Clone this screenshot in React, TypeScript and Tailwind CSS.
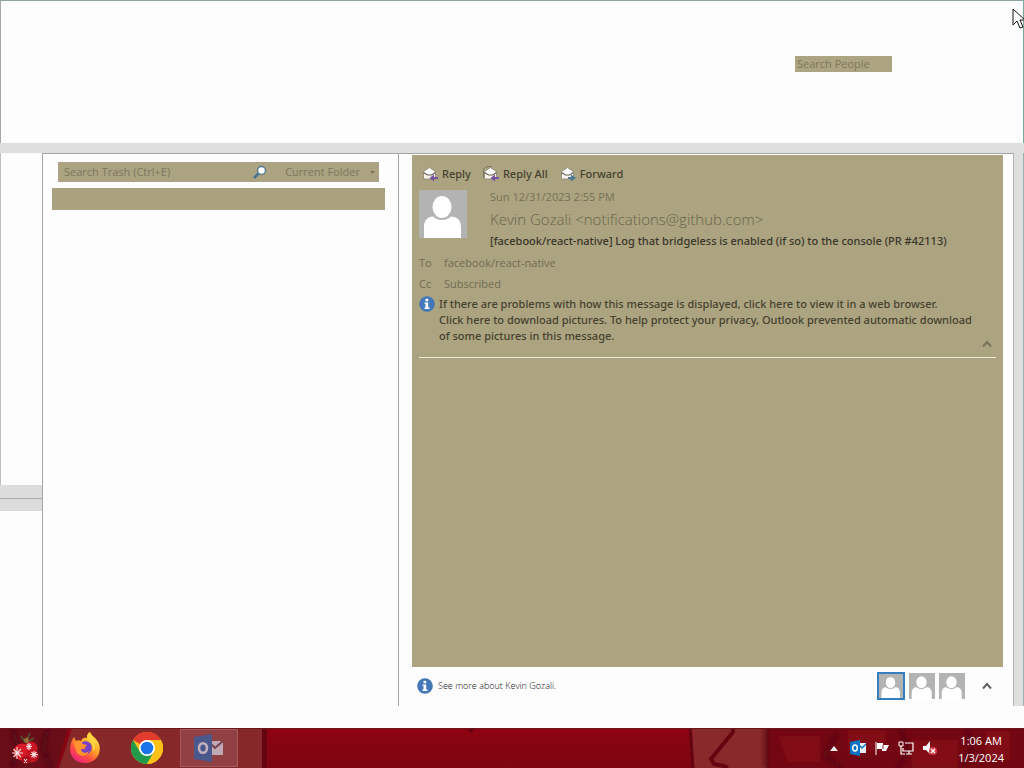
import React from "react";

function Person({ className }: { className: string }) {
  return (
    <svg viewBox="0 0 48 48" className={className} aria-hidden="true">
      <rect width="48" height="48" fill="#b3b3b3" />
      <ellipse cx="23" cy="17" rx="9.5" ry="11" fill="#fff" />
      <path d="M5 48V37C5 30 9 26.500 14 26.500C18 31 28 31 32 26.500C38 26.500 42 30 42 37V48Z" fill="#fff" />
    </svg>
  );
}

function Info() {
  return (
    <svg viewBox="0 0 16 16" className="size-4 shrink-0" aria-hidden="true">
      <circle cx="8" cy="8" r="7.800" fill="#4377b8" />
      <rect x="6.500" y="2.800" width="2.700" height="2.500" fill="#fff" />
      <path d="M5.500 6.500H9.200V11.500H10.500V13H5.500V11.500H6.500V7.700H5.500Z" fill="#fff" />
    </svg>
  );
}

function Mail({ arrow, all, right }: { arrow: string; all?: boolean; right?: boolean }) {
  return (
    <svg viewBox="0 0 16 16" className="size-4 shrink-0" aria-hidden="true">
      {all && <path d="M0.500 12V3L4 0.500H9" fill="none" stroke="#7d7763" />}
      <path d="M1.500 5.500L7.500 1.500L13.500 5.500V13H1.500Z" fill="#f7f3ec" stroke="#8a8474" strokeWidth="0.800" />
      <path d="M3.500 5L7.500 2.500L11.500 5V7.500L7.500 9L3.500 7.500Z" fill="#fff" />
      <path d="M1.500 6.500L5.500 9H9.500L13.500 6.500" fill="none" stroke="#66614f" strokeWidth="1.200" />
      {right ? (
        <path d="M8 11H11V8.500L16 12L11 15.500V13H8Z" fill={arrow} />
      ) : (
        <path d="M16 11H12V8.500L7.500 12L12 15.500V13H16Z" fill={arrow} />
      )}
    </svg>
  );
}

function Caret({ className }: { className: string }) {
  return (
    <svg viewBox="0 0 10 8" className={className} aria-hidden="true">
      <path d="M1 6.500L5 2L9 6.500" fill="none" stroke="currentColor" strokeWidth="2" />
    </svg>
  );
}

function Ornament() {
  return (
    <svg viewBox="0 0 32 36" className="h-9 w-8" aria-hidden="true">
      <path d="M15 12L11 6M16 12L20 3M17 12L24 8" stroke="#4c5a2b" strokeWidth="1.500" />
      <path d="M14 9L18 7L19 13L15 13Z" fill="#96743c" />
      <circle cx="21" cy="18" r="6.500" fill="#c91522" />
      <circle cx="12" cy="22" r="8.500" fill="#d81b28" />
      <circle cx="22" cy="26" r="6.500" fill="#c51422" />
      <circle cx="16" cy="30" r="4" fill="#a60b18" />
      <g stroke="#f6dcdc" strokeWidth="1.100">
        <path d="M7 17V29M2 23H13M3.500 19L11 27M11 19L3.500 27" />
        <path d="M19 13V20M16 16.500H22M17 14L21 19M21 14L17 19" />
        <path d="M24 21V28M20.500 24.500H28M21.500 22L26.500 27M26.500 22L21.500 27M14 29L17 33M17 29L14 33" />
      </g>
    </svg>
  );
}

function Firefox() {
  return (
    <svg viewBox="0 0 32 32" className="size-8" aria-hidden="true">
      <defs>
        <linearGradient id="fx" x1="0.8" y1="0.1" x2="0.25" y2="0.9">
          <stop offset="0" stopColor="#ffe14a" />
          <stop offset="0.45" stopColor="#ff9a26" />
          <stop offset="0.75" stopColor="#ff4b42" />
          <stop offset="1" stopColor="#ef2c74" />
        </linearGradient>
      </defs>
      <path d="M18 6C18 3 19 1 21 0C22 4 28 6 30 12C33 21 27 31 16 31C7 31 1 25 1 17C1 12 3 8 5 5L7 9C9 8 10 8 12 9C13 6 15 5 18 6Z" fill="url(#fx)" />
      <path d="M11 13C13 9 17 8 21 11C24 14 23 20 19 22C14 24 10 21 10 17C12 17 15 18 17 16C15 15 13 14 11 13Z" fill="#7641c4" />
      <path d="M5 11C8 8 12 9 14 12L18 13C17 15 14 16 12 17C12 21 17 22 20 19C18 26 9 25 7 19Z" fill="#ff922c" />
      <path d="M18 6C18 3 19 1 21 0C22 4 28 6 29 13C28 11 26 10 25 9C27 14 26 18 24 20C25 12 21 10 18 6Z" fill="#ffd43d" />
    </svg>
  );
}

function Chrome() {
  return (
    <svg viewBox="0 0 32 32" className="size-8" aria-hidden="true">
      <circle cx="16" cy="16" r="16" fill="#fbc116" />
      <path d="M16 16L2.100 8A16 16 0 0 1 29.900 8H16Z" fill="#e33b2e" />
      <path d="M2.100 8A16 16 0 0 0 16 32L23 20H9Z" fill="#229a4b" />
      <path d="M16 8H29.900A16 16 0 0 1 16 32L23 20Z" fill="#fbc116" />
      <circle cx="16" cy="16" r="8" fill="#fff" />
      <circle cx="16" cy="16" r="6.300" fill="#1a73e8" />
    </svg>
  );
}

function OutlookLarge() {
  return (
    <svg viewBox="0 0 30 28" className="h-7 w-8" aria-hidden="true">
      <rect x="16" y="7" width="13" height="14" fill="#c0a8b4" />
      <path d="M17 10L21 14L29 7" fill="none" stroke="#74414d" strokeWidth="2" />
      <path d="M0 3L18 0V28L0 25Z" fill="#4a588c" />
      <ellipse cx="9" cy="14" rx="4" ry="4.800" fill="none" stroke="#c4b0be" strokeWidth="2.600" />
    </svg>
  );
}

function Wallpaper() {
  return (
    <svg viewBox="0 0 1024 40" preserveAspectRatio="none" className="absolute inset-0 size-full" aria-hidden="true">
      <defs>
        <linearGradient id="red" x1="0" y1="0" x2="0" y2="1">
          <stop offset="0" stopColor="#8e0312" />
          <stop offset="1" stopColor="#7d0611" />
        </linearGradient>
        <filter id="soft"><feGaussianBlur stdDeviation="2" /></filter>
      </defs>
      <rect width="1024" height="40" fill="url(#red)" />
      <path d="M0 0H68L56 40H0Z" fill="#690d18" />
      <path d="M12 0L18 20L12 40M48 0L43 18L50 40" fill="none" stroke="#500914" strokeWidth="4" filter="url(#soft)" />
      <path d="M72 0H262V40H59Z" fill="#862829" />
      <path d="M262 0H267V40H262Z" fill="#650510" />
      <path d="M692 0H766V40H694Z" fill="#8a292b" />
      <path d="M690 0L693 40" stroke="#650510" strokeWidth="3" />
      <path d="M733 0V4L711 31L714 36L724 38L728 40" fill="none" stroke="#650510" strokeWidth="4" />
      <path d="M766 0H1024V40H766Z" fill="#720713" />
      <g filter="url(#soft)">
        <path d="M778 8H820V34H788ZM848 2H886V23H848ZM912 12H958V40H912ZM986 3H1010V31H986Z" fill="#830b19" />
        <path d="M766 0V40M838 5L824 27L842 40M900 0L909 23L897 40M966 0L973 18L962 40" fill="none" stroke="#5b0712" strokeWidth="4" />
      </g>
      <path d="M467 0H475L471 5Z" fill="#650510" />
      <path d="M0 0H1024V1H0Z" fill="#6a161c" />
    </svg>
  );
}

export default function App() {
  return (
    <div className="relative flex min-h-screen flex-col overflow-hidden bg-[#fdfdfd] font-['Open_Sans','Liberation_Sans',sans-serif] text-[11px] text-[#45412f]">
      <header className="flex h-[143px] shrink-0 items-start justify-end border-t border-r border-l border-t-[#8da3a1] border-r-[#78a9a0] border-l-[#a5a5a5] pt-[55px] pr-[131px]">
        <input aria-label="Search People" placeholder="Search People" className="h-4 w-[97px] bg-[#ada581] px-0.5 outline-none placeholder:text-[#7d775d]" />
      </header>
      <div className="h-2.5 shrink-0 bg-[#dedede]" />

      <main className="flex grow">
        <aside className="flex w-[43px] shrink-0 flex-col border-r border-[#a5a5a5]">
          <div className="h-[332px] border-l border-[#bdbdbd]" />
          <div className="h-3.5 border-b border-[#ababab] bg-[#dcdcdc]" />
          <div className="h-3 bg-[#dcdcdc]" />
        </aside>

        <section className="flex w-[356px] shrink-0 flex-col border-t border-r border-[#a5a5a5] pt-2 pr-[13px] pl-[9px]">
          <div className="mr-1.5 ml-1.5 flex h-5 items-center bg-[#aba381] pr-1 pl-1.5 text-[#7d775d]">
            <input aria-label="Search Trash (Ctrl+E)" placeholder="Search Trash (Ctrl+E)" className="min-w-0 grow bg-transparent outline-none placeholder:text-[#7d775d]" />
            <button aria-label="Search" className="mr-[18px]">
              <svg viewBox="0 0 14 14" className="size-3.5">
                <path d="M1 13L6 8" stroke="#46748e" strokeWidth="2.500" />
                <circle cx="8.500" cy="5.500" r="4" fill="#fff" stroke="#547c8e" strokeWidth="1.500" />
              </svg>
            </button>
            <button className="flex items-center gap-2.5">
              Current Folder
              <svg viewBox="0 0 6 4" className="h-[3px] w-[5px]"><path d="M0 0H6L3 4Z" fill="#766f59" /></svg>
            </button>
          </div>
          <div className="mt-1.5 h-[22px] bg-[#aaa27e]" />
        </section>

        <section className="flex min-w-0 grow flex-col border-t border-[#a5a5a5] pt-px pr-2.5 pl-[13px]">
          <article className="flex h-[512px] flex-col bg-[#aca480] px-[7px] pt-2.5">
            <nav className="flex h-[18px] items-center gap-3 px-[3px] font-['Noto_Sans','Open_Sans',sans-serif] font-medium">
              <button className="flex items-center gap-1"><Mail arrow="#77549b" />Reply</button>
              <button className="flex items-center gap-1"><Mail arrow="#77549b" all />Reply All</button>
              <button className="flex items-center gap-1"><Mail arrow="#4d7892" right />Forward</button>
            </nav>
            <div className="mt-1.5 flex">
              <Person className="mt-px mr-[23px] size-12 shrink-0" />
              <div className="min-w-0">
                <time className="block h-4 leading-4 text-[#777157]">Sun 12/31/2023 2:55 PM</time>
                <div className="mt-0.5 h-6 text-[15px] leading-6 font-light text-[#68634d]">Kevin Gozali &lt;notifications@github.com&gt;</div>
                <h1 className="mt-0.5 font-['Noto_Sans','Open_Sans',sans-serif] leading-4 font-medium whitespace-nowrap text-[#39362a]">[facebook/react-native] Log that bridgeless is enabled (if so) to the console (PR #42113)</h1>
              </div>
            </div>
            <dl className="mt-[3px] grid grid-cols-[25px_1fr] leading-[21px] text-[#706b53]">
              <dt>To</dt><dd>facebook/react-native</dd>
              <dt>Cc</dt><dd>Subscribed</dd>
            </dl>
            <div className="mt-0.5 flex gap-1 border-b border-[#ece9db] pb-[13px]">
              <Info />
              <p className="min-w-0 grow font-['Noto_Sans','Open_Sans',sans-serif] leading-4 font-medium">
                If there are problems with how this message is displayed, click here to view it in a web browser.<br />
                Click here to download pictures. To help protect your privacy, Outlook prevented automatic download<br />
                of some pictures in this message.
              </p>
              <button aria-label="Collapse message header" className="-mb-1 -ml-2 self-end pr-1 text-[#77715a]"><Caret className="h-2 w-2.5" /></button>
            </div>
          </article>
          <footer className="flex h-[38px] items-center pr-[11px] pl-[5px]">
            <Info />
            <a href="#people" className="ml-[5px] grow text-[9px] font-light text-[#101010]">See more about Kevin Gozali.</a>
            <div className="flex items-center gap-1">
              <button aria-label="Kevin Gozali" className="border-2 border-[#347fbd]"><Person className="size-6" /></button>
              <button aria-label="Second contact"><Person className="size-[26px]" /></button>
              <button aria-label="Third contact"><Person className="size-[26px]" /></button>
            </div>
            <button aria-label="Expand people pane" className="ml-[17px] text-[#626262]"><Caret className="h-2 w-2.5" /></button>
          </footer>
        </section>
        <aside className="w-[11px] shrink-0 border-r border-l border-r-[#9dafb2] border-l-[#b5b5b5] bg-[#dfdfdf]" />
      </main>
      <div className="h-[22px] shrink-0" />

      <footer className="relative flex h-10 shrink-0 overflow-hidden text-white">
        <Wallpaper />
        <nav className="relative flex items-center">
          <button aria-label="Start" className="ml-2.5"><Ornament /></button>
          <button aria-label="Firefox" className="ml-[27px]"><Firefox /></button>
          <button aria-label="Chrome" className="ml-[30px]"><Chrome /></button>
          <button aria-label="Outlook" className="ml-[17px] flex h-[38px] w-[58px] items-center justify-center border border-[#a45a5c] bg-[#914043]"><OutlookLarge /></button>
        </nav>
        <div className="relative ml-auto flex items-center gap-2 pr-5">
          <button aria-label="Show hidden icons" className="mr-1">
            <svg viewBox="0 0 8 5" className="h-[5px] w-2"><path d="M4 0L8 5H0Z" fill="#eee" /></svg>
          </button>
          <svg viewBox="0 0 16 16" className="size-4" aria-label="Outlook">
            <rect x="8" y="3" width="8" height="10" fill="#e5f1fb" />
            <path d="M9 5L12 8L16 4" fill="none" stroke="#1479c7" strokeWidth="1.500" />
            <path d="M0 2L10 0V16L0 14Z" fill="#0872c7" />
            <ellipse cx="5" cy="8" rx="2.300" ry="3" fill="none" stroke="#fff" strokeWidth="1.500" />
          </svg>
          <svg viewBox="0 0 16 16" className="size-4" aria-label="Action Center">
            <path d="M2 2V15" stroke="#fff" />
            <path d="M3 3H9V5H15L12 11H8V9H3Z" fill="#fff" />
            <path d="M9 5V9" stroke="#872531" />
          </svg>
          <svg viewBox="0 0 16 16" className="size-4" aria-label="Network">
            <path d="M7 3H15V11H5V8M8 14H14M11 11V14M3 6V14H7" fill="none" stroke="#fff" strokeWidth="1.200" />
            <path d="M1 2H5V6H1Z" fill="none" stroke="#fff" />
          </svg>
          <svg viewBox="0 0 16 16" className="size-4" aria-label="Muted">
            <path d="M1 6H4L8 1V14L4 10H1Z" fill="#fff" />
            <circle cx="11" cy="11" r="4" fill="#d43c48" />
            <path d="M9 9L13 13M13 9L9 13" stroke="#fff" strokeWidth="1.400" />
          </svg>
          <time className="ml-3 pt-0.5 text-center leading-[17px]">1:06 AM<br />1/3/2024</time>
        </div>
      </footer>
      <svg viewBox="0 0 12 21" className="absolute top-2 right-0 h-[21px] w-3" aria-hidden="true">
        <path d="M1 1V17L5 13L8 20L11 19L8 12H13Z" fill="#fff" stroke="#111" />
      </svg>
    </div>
  );
}
